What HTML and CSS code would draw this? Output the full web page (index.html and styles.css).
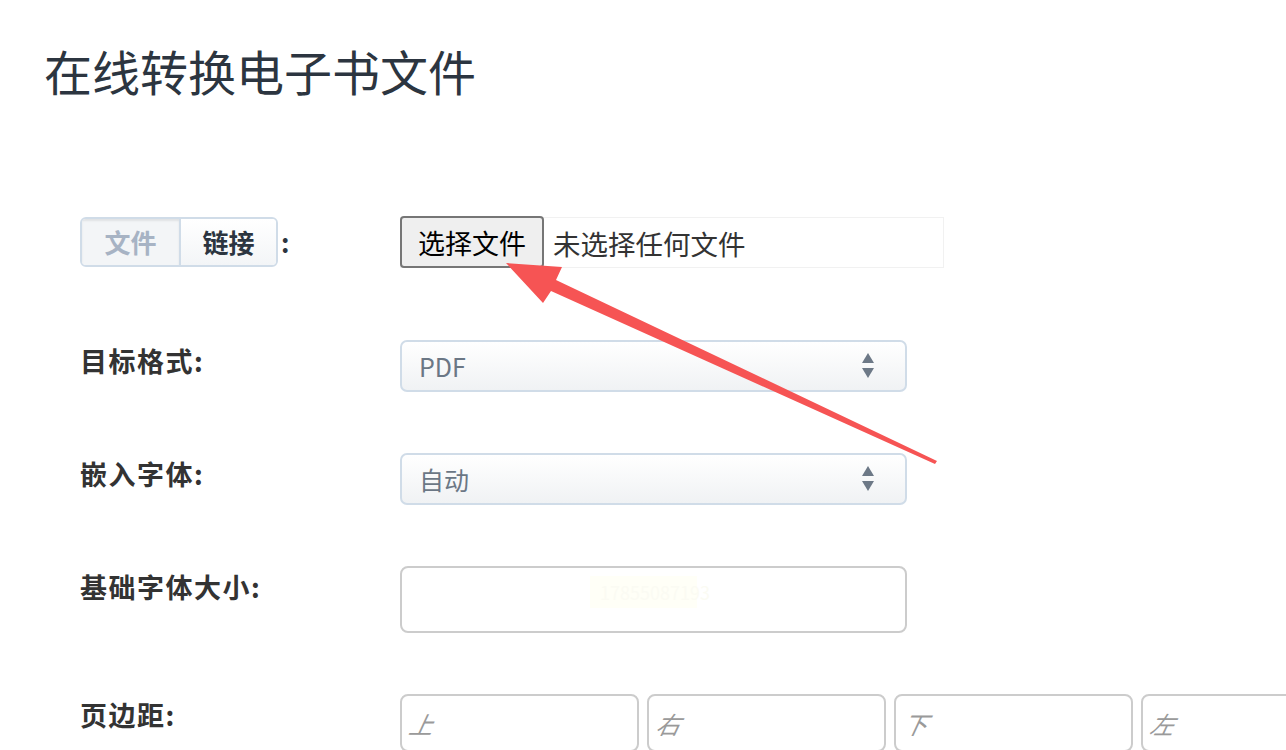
FILE: index.html
```html
<!DOCTYPE html>
<html lang="zh-CN">
<head>
<meta charset="utf-8">
<title>在线转换电子书文件</title>
<link rel="stylesheet" href="styles.css">
</head>
<body>
<div class="page">
  <h1 class="title">在线转换电子书文件</h1>
  <form class="form">
    <div class="row row-first">
      <div class="label label-toggle">
        <div class="toggle">
          <span class="seg seg-active">文件</span>
          <span class="seg">链接</span>
        </div>
        <span class="colon">:</span>
      </div>
      <div class="control">
        <div class="file-box">
          <span class="file-btn">选择文件</span>
          <span class="file-text">未选择任何文件</span>
        </div>
      </div>
    </div>
    <div class="row">
      <div class="label">目标格式:</div>
      <div class="control">
        <div class="select">
          <span class="select-text">PDF</span>
          <svg class="select-arrows" width="14" height="28" viewBox="0 0 14 28"><path d="M7 1 L13 11 L1 11 Z" fill="#6d7987"/><path d="M1 16 L13 16 L7 26 Z" fill="#6d7987"/></svg>
        </div>
      </div>
    </div>
    <div class="row">
      <div class="label">嵌入字体:</div>
      <div class="control">
        <div class="select">
          <span class="select-text">自动</span>
          <svg class="select-arrows" width="14" height="28" viewBox="0 0 14 28"><path d="M7 1 L13 11 L1 11 Z" fill="#6d7987"/><path d="M1 16 L13 16 L7 26 Z" fill="#6d7987"/></svg>
        </div>
      </div>
    </div>
    <div class="row">
      <div class="label">基础字体大小:</div>
      <div class="control">
        <div class="text-input tall">
          <span class="ghost">17855087193</span>
        </div>
      </div>
    </div>
    <div class="row">
      <div class="label">页边距:</div>
      <div class="control margins">
        <div class="text-input margin"><span class="ph">上</span></div>
        <div class="text-input margin"><span class="ph">右</span></div>
        <div class="text-input margin"><span class="ph">下</span></div>
        <div class="text-input margin"><span class="ph">左</span></div>
      </div>
    </div>
  </form>
  <svg class="arrow" width="1286" height="750" viewBox="0 0 1286 750">
    <polygon points="506,263 562,267 556,280 937,461 935,464 551,291 543,303" fill="#f65454"/>
  </svg>
</div>
</body>
</html>
```

FILE: styles.css
```css
* { box-sizing: border-box; }
html, body {
  margin: 0;
  padding: 0;
  background: #ffffff;
  overflow: hidden;
}
body {
  font-family: "Noto Sans CJK SC", "Noto Sans", sans-serif;
  color: #333333;
  width: 1286px;
  height: 750px;
}
.page {
  position: relative;
  width: 1286px;
  height: 750px;
  overflow: hidden;
}
.title {
  margin: 0;
  padding: 35px 0 0 44px;
  font-size: 48px;
  font-weight: 400;
  line-height: 70px;
  color: #2c3540;
}
.form {
  display: flex;
  flex-direction: column;
  gap: 61px;
  padding: 112px 0 0 80px;
}
.row {
  display: grid;
  grid-template-columns: 320px 1fr;
  align-items: start;
}
.row-first { margin-bottom: 11px; }
.label {
  font-size: 27px;
  font-weight: 700;
  letter-spacing: 1.5px;
  line-height: 36px;
  padding-top: 3px;
  color: #333333;
  white-space: nowrap;
}
.label-toggle {
  display: flex;
  align-items: center;
  padding-top: 0;
  letter-spacing: 0;
}
.toggle {
  display: flex;
  height: 50px;
  border: 2px solid #d0dce8;
  border-radius: 6px;
  overflow: hidden;
}
.seg {
  width: 97px;
  display: flex;
  align-items: center;
  justify-content: center;
  font-size: 26px;
  font-weight: 700;
  color: #2c3540;
  background: linear-gradient(#ffffff, #f3f5f7);
}
.seg + .seg { border-left: 2px solid #d0dce8; }
.seg-active {
  color: #a7b3c4;
  background: #f3f5f7;
  box-shadow: inset 0 2px 2px rgba(0,0,0,0.08);
}
.colon {
  margin-left: 3px;
  font-size: 26px;
  font-weight: 700;
  color: #2c3540;
}
.file-box {
  display: flex;
  align-items: center;
  width: 544px;
  height: 51px;
  border: 1px solid #f1f1f1;
}
.file-btn {
  display: flex;
  align-items: center;
  justify-content: center;
  width: 144px;
  height: 52px;
  margin: -1px 0 0 -1px;
  border: 2px solid #767676;
  border-radius: 4px;
  background: #efefef;
  font-size: 27px;
  color: #000000;
}
.file-text {
  margin-left: 9px;
  font-size: 27.5px;
  color: #333333;
}
.select {
  position: relative;
  display: flex;
  align-items: center;
  width: 507px;
  height: 52px;
  padding: 0 0 0 17px;
  border: 2px solid #d0dce8;
  border-radius: 7px;
  background: linear-gradient(#ffffff, #f0f2f4);
}
.select-text {
  font-size: 25px;
  color: #6b7785;
  flex: 1;
}
.select-arrows {
  margin-right: 30px;
}
.text-input {
  border: 2px solid #cccccc;
  border-radius: 8px;
  background: #ffffff;
}
.tall {
  position: relative;
  width: 507px;
  height: 67px;
}
.ghost {
  position: absolute;
  left: 188px;
  top: 8px;
  width: 107px;
  height: 32px;
  background: #fffff7;
  color: #fbfbf3;
  font-size: 18px;
  line-height: 32px;
  padding-left: 10px;
}
.margins {
  display: flex;
  gap: 8px;
}
.margin {
  flex: 0 0 239px;
  height: 58px;
  padding-left: 8px;
  display: flex;
  align-items: center;
}
.ph {
  font-size: 24px;
  font-style: italic;
  color: #9a9a9a;
  transform: skewX(-12deg);
  display: inline-block;
}
.arrow {
  position: absolute;
  left: 0;
  top: 0;
  pointer-events: none;
}
```
